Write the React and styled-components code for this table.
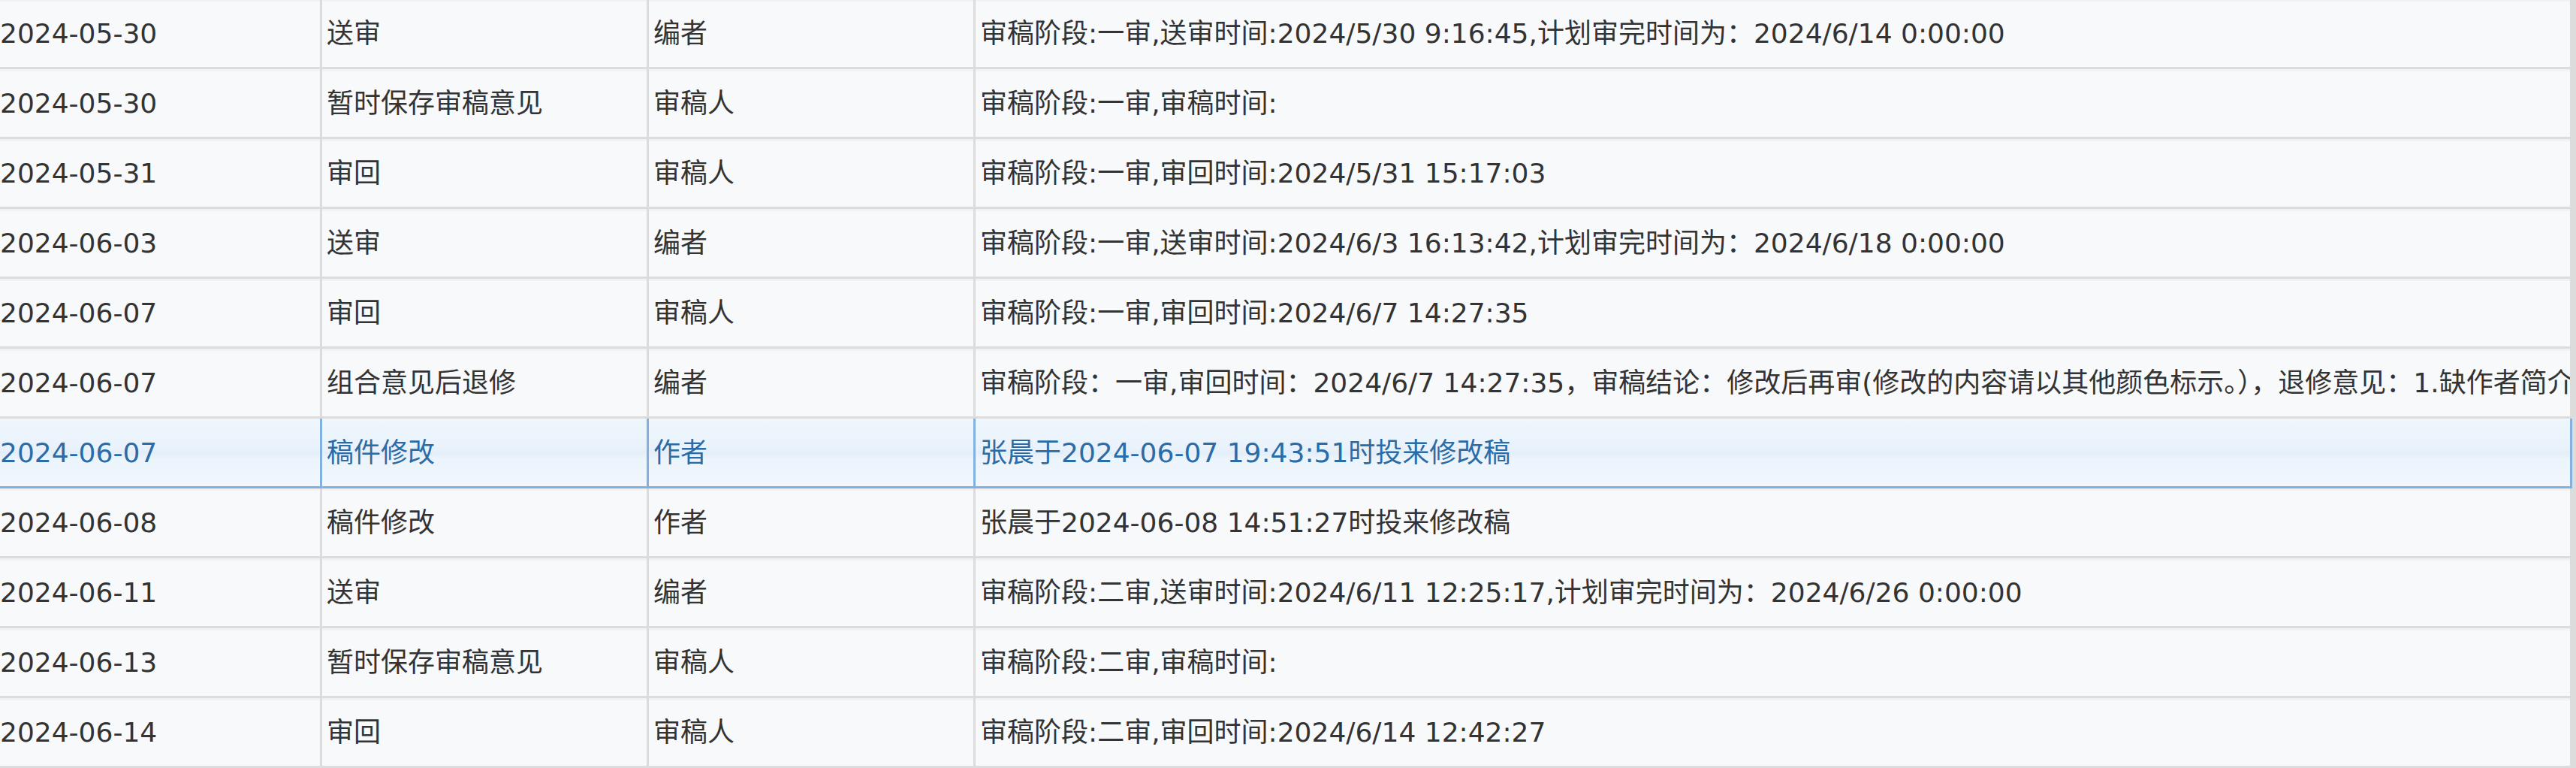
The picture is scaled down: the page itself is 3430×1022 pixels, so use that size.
import React from "react";
import styled, { createGlobalStyle, css } from "styled-components";

const GlobalStyle = createGlobalStyle`
  html, body {
    margin: 0;
    padding: 0;
    background: #f8f9fb;
    overflow: hidden;
  }
  body {
    font-family: "DejaVu Sans", "Noto Sans CJK SC", sans-serif;
  }
`;

const Table = styled.div`
  width: 3430px;
  height: 1022px;
  overflow: hidden;
  box-sizing: border-box;
  border-right: 5px solid #dcdcdc;
  background: #f8f9fb;
`;

const Body = styled.div`
  display: flex;
  flex-direction: column;
  margin-top: -1px;
`;

const Row = styled.div`
  display: grid;
  grid-template-columns: 429px 435px 435px 1fr;
  height: 93px;
  box-sizing: border-box;
  border-bottom: 3px solid #dcdcdc;
  background: linear-gradient(#f1f2f4 0 3px, #f8f9fb 3px);
  color: #333333;

  ${(p) =>
    p.$selected &&
    css`
      border-bottom-color: #82b1df;
      background: linear-gradient(
        #eff6fd 0%,
        #e9f2fb 45%,
        #e3eef9 50%,
        #ecf4fc 60%,
        #f1f7fd 100%
      );
      color: #2c6ca6;
    `}
`;

const Cell = styled.div`
  display: flex;
  align-items: center;
  min-width: 0;
  overflow: hidden;
  white-space: nowrap;
  box-sizing: border-box;
  padding-left: ${(p) => (p.$first ? "0" : "6px")};
  padding-top: 2px;
  border-right: 3px solid ${(p) => (p.$selected ? "#82b1df" : "#dcdcdc")};
  font-size: 36px;
  line-height: 1;
`;

const rows = [
  ["2024-05-30", "送审", "编者", "审稿阶段:一审,送审时间:2024/5/30 9:16:45,计划审完时间为：2024/6/14 0:00:00"],
  ["2024-05-30", "暂时保存审稿意见", "审稿人", "审稿阶段:一审,审稿时间:"],
  ["2024-05-31", "审回", "审稿人", "审稿阶段:一审,审回时间:2024/5/31 15:17:03"],
  ["2024-06-03", "送审", "编者", "审稿阶段:一审,送审时间:2024/6/3 16:13:42,计划审完时间为：2024/6/18 0:00:00"],
  ["2024-06-07", "审回", "审稿人", "审稿阶段:一审,审回时间:2024/6/7 14:27:35"],
  [
    "2024-06-07",
    "组合意见后退修",
    "编者",
    "审稿阶段：一审,审回时间：2024/6/7 14:27:35，审稿结论：修改后再审(修改的内容请以其他颜色标示。），退修意见：1.缺作者简介",
  ],
  ["2024-06-07", "稿件修改", "作者", "张晨于2024-06-07 19:43:51时投来修改稿", true],
  ["2024-06-08", "稿件修改", "作者", "张晨于2024-06-08 14:51:27时投来修改稿"],
  ["2024-06-11", "送审", "编者", "审稿阶段:二审,送审时间:2024/6/11 12:25:17,计划审完时间为：2024/6/26 0:00:00"],
  ["2024-06-13", "暂时保存审稿意见", "审稿人", "审稿阶段:二审,审稿时间:"],
  ["2024-06-14", "审回", "审稿人", "审稿阶段:二审,审回时间:2024/6/14 12:42:27"],
];

export default function App() {
  return (
    <>
      <GlobalStyle />
      <Table>
        <Body>
          {rows.map(([date, action, role, detail, selected], i) => (
            <Row key={i} $selected={selected}>
              <Cell $first $selected={selected}>{date}</Cell>
              <Cell $selected={selected}>{action}</Cell>
              <Cell $selected={selected}>{role}</Cell>
              <Cell $selected={selected}>{detail}</Cell>
            </Row>
          ))}
        </Body>
      </Table>
    </>
  );
}
